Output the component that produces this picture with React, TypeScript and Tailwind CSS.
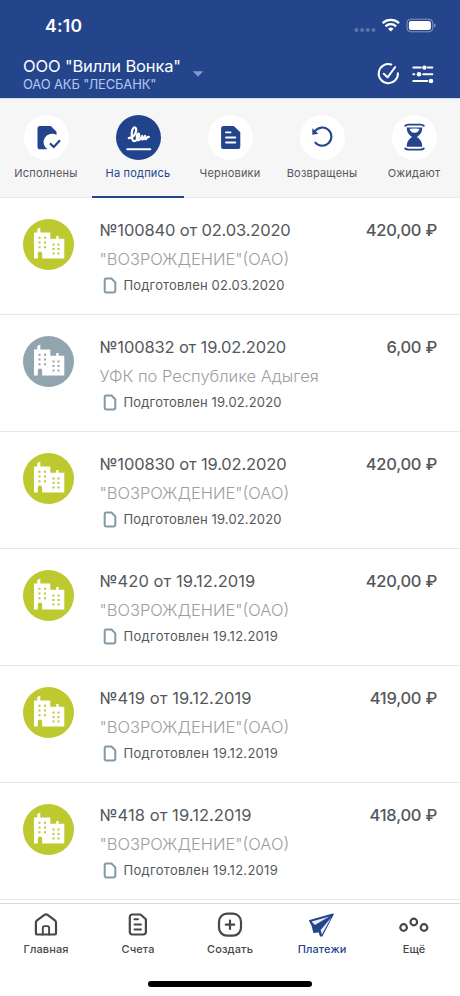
import type { ReactNode } from "react";

type Payment = {
  title: string;
  payee: string;
  date: string;
  amount: string;
  color: string;
};

const PAYMENTS: Payment[] = [
  { title: "№100840 от 02.03.2020", payee: '"ВОЗРОЖДЕНИЕ"(ОАО)', date: "02.03.2020", amount: "420,00 ₽", color: "bg-[#bdc92e]" },
  { title: "№100832 от 19.02.2020", payee: "УФК по Республике Адыгея", date: "19.02.2020", amount: "6,00 ₽", color: "bg-[#91a5af]" },
  { title: "№100830 от 19.02.2020", payee: '"ВОЗРОЖДЕНИЕ"(ОАО)', date: "19.02.2020", amount: "420,00 ₽", color: "bg-[#bdc92e]" },
  { title: "№420 от 19.12.2019", payee: '"ВОЗРОЖДЕНИЕ"(ОАО)', date: "19.12.2019", amount: "420,00 ₽", color: "bg-[#bdc92e]" },
  { title: "№419 от 19.12.2019", payee: '"ВОЗРОЖДЕНИЕ"(ОАО)', date: "19.12.2019", amount: "419,00 ₽", color: "bg-[#bdc92e]" },
  { title: "№418 от 19.12.2019", payee: '"ВОЗРОЖДЕНИЕ"(ОАО)', date: "19.12.2019", amount: "418,00 ₽", color: "bg-[#bdc92e]" },
];

function StatusIcons() {
  return (
    <svg width="86" height="16" viewBox="0 0 86 16" className="mr-[22px]">
      <g fill="#fff" opacity="0.25">
        <circle cx="4.4" cy="12" r="2" />
        <circle cx="10.1" cy="12" r="2" />
        <circle cx="15.8" cy="12" r="2" />
        <circle cx="21.5" cy="12" r="2" />
      </g>
      <g fill="none" stroke="#fff" strokeWidth="2.3">
        <path d="M30.6 5.1a12.2 12.2 0 0 1 16.4 0" />
        <path d="M33.5 8.3a7.8 7.8 0 0 1 10.6 0" />
      </g>
      <path d="M38.8 13.6 36 10.8a4.1 4.1 0 0 1 5.6 0z" fill="#fff" />
      <rect x="55" y="1.2" width="25.8" height="12.6" rx="3.8" fill="none" stroke="#fff" strokeOpacity="0.45" />
      <rect x="56.9" y="3" width="22" height="9" rx="2" fill="#fff" />
      <path d="M82.2 5.4a2.3 2.3 0 0 1 0 4.2z" fill="#fff" fillOpacity="0.5" />
    </svg>
  );
}

function Header() {
  return (
    <header className="h-[98px] bg-[#24458c] text-white">
      <div className="flex h-[52px] items-center justify-between">
        <span className="ml-[45px] text-[17.5px] leading-5 font-semibold tracking-[0.3px]">4:10</span>
        <StatusIcons />
      </div>
      <div className="flex h-[46px]">
        <div className="ml-[23px] w-[168px] pt-[4px] whitespace-nowrap">
          <p className="text-[16.5px] leading-5 tracking-[-0.15px]">ООО "Вилли Вонка"</p>
          <p className="text-[13px] leading-4 tracking-[-0.15px] text-[#b6c8f2]">ОАО АКБ "ЛЕСБАНК"</p>
        </div>
        <svg width="12" height="6" viewBox="0 0 12 6" className="mt-[19px] ml-[1px]">
          <path d="M.8.3h10.4L6 5.8z" fill="#8699c9" />
        </svg>
        <div className="mt-[10px] mr-[25px] ml-auto flex gap-[11px]">
          <svg width="24" height="24" viewBox="0 0 24 24" fill="none" stroke="#fff" strokeWidth="2" strokeLinecap="round" strokeLinejoin="round">
            <path d="M15.3 2.5a9.6 9.6 0 1 0 6.6 8.7" />
            <path d="m7.8 11.7 3.8 3.7L19.2 5" />
          </svg>
          <svg width="24" height="24" viewBox="0 0 24 24" fill="none" stroke="#fff" strokeWidth="2" strokeLinecap="round">
            <path d="M2.3 5.6h7.5M16.8 5.6h4.5M2.3 12.3h1M12.2 12.3h9.1M2.3 19h14" />
            <g fill="#fff" stroke="none">
              <circle cx="13.4" cy="5.6" r="2.2" />
              <circle cx="8" cy="12.3" r="2.3" />
              <circle cx="20" cy="19" r="2.3" />
            </g>
          </svg>
        </div>
      </div>
    </header>
  );
}

function Tab({ label, active, children }: { label: string; active?: boolean; children: ReactNode }) {
  return (
    <button
      className={
        active
          ? "flex flex-1 flex-col items-center border-b-2 border-[#24458c] pt-[16px] text-[#24458c]"
          : "flex flex-1 flex-col items-center border-b border-[#e7ebed] pt-[16px] text-[#55575a]"
      }
    >
      <span className={active ? "size-[45px] rounded-full bg-[#21438c]" : "size-[45px] rounded-full bg-white"}>
        <svg width="45" height="45" viewBox="0 0 45 45">{children}</svg>
      </span>
      <span className="mt-[5px] text-[11px] leading-4 tracking-[0.2px] whitespace-nowrap">{label}</span>
    </button>
  );
}

function Tabs() {
  return (
    <nav className="flex h-[100px] border-t border-[#d3dff7] bg-[#f6f6f7]">
      <Tab label="Исполнены">
        <path d="M16.1 11h10.7l5.7 5.7V20a8.2 8.2 0 0 0-9 14.3h-7.4a2.6 2.6 0 0 1-2.6-2.6V13.6a2.6 2.6 0 0 1 2.6-2.6z" fill="#24458c" />
        <path d="m26 28.4 3.8 3.6 6.2-6.8" fill="none" stroke="#24458c" strokeWidth="2.2" />
      </Tab>
      <Tab label="На подпись" active>
        <g fill="none" stroke="#fff" strokeLinecap="round" strokeLinejoin="round">
          <path d="M12.8 23.2c4.7-.5 8.4-6.1 7.2-9.6-1-2.7-4.3-.4-4.3 5.2 0 4.4.7 7.9 3.3 7.200 2.900-.8 4.800-4.900 4.100-6.700-.8-1.700-2.600.2-2.300 3.400.3 3.600 3 3.200 4.600-.2l.8-1.600c-.8 3.500.2 4.700 1.600 2.300l1.300-2.300c-.8 3.200.4 4.200 1.700 2 .8-1.400 1.300-1.200 2-.9" strokeWidth="2.2" />
          <path d="M11.3 34.3h23" strokeWidth="2" />
        </g>
      </Tab>
      <Tab label="Черновики">
        <path d="M15.7 11h10.1l6.5 6.2v14.3a2.6 2.6 0 0 1-2.6 2.6h-14a2.6 2.6 0 0 1-2.6-2.6V13.6a2.6 2.6 0 0 1 2.6-2.6z" fill="#24458c" />
        <path d="M18 17.4h4.500M18 22.500h9.300M18 27.500h9.300" fill="none" stroke="#fff" strokeWidth="1.9" strokeLinecap="round" />
      </Tab>
      <Tab label="Возвращены">
        <path d="M15 16.2A9.1 9.1 0 1 1 15.4 27.6" fill="none" stroke="#24458c" strokeWidth="2.1" strokeLinecap="round" />
        <path d="M12.3 13.2v6.600l6-1z" fill="#24458c" />
      </Tab>
      <Tab label="Ожидают">
        <path d="M13.2 10.8c1-1.3 2.300-1.200 3.800-1.200h11c1.500 0 2.800-.1 3.800 1.200M13.200 33.400c1 1.300 2.300 1.200 3.800 1.200h11c1.500 0 2.800.1 3.800-1.200" fill="none" stroke="#24458c" strokeWidth="1.9" strokeLinecap="round" />
        <path d="M14.8 12.5h15.4c0 5-2 7.300-5.400 9.600 3.400 2.300 5.400 4.600 5.400 9.600H14.800c0-5 2-7.300 5.400-9.600-3.400-2.300-5.400-4.600-5.400-9.600z" fill="#24458c" />
        <path d="M17.6 14.1c1-.8 8.800-.8 9.800 0-.5 2.300-2.200 3.700-4.900 3.700s-4.400-1.400-4.900-3.700z" fill="#fff" />
      </Tab>
    </nav>
  );
}

function BuildingIcon() {
  return (
    <svg width="51" height="51" viewBox="0 0 51 51">
      <path
        fillRule="evenodd"
        fill="#fff"
        d="M11 13.500h3.300V10l3-1.500v5h10v6.200h6V17h2.300v2.700h5.700v19.800H19.200v-4.700a2.200 2.200 0 0 0-4.400 0v4.700H11zM15.500 17.700v2h2v-2zM21 17.700v2h2v-2zM15.500 22.400v2h2v-2zM21 22.400v2h2v-2zM15.500 27.200v2h2v-2zM21 27.200v2h2v-2zM29.500 24.500v2h2v-2zM34.500 24.500v2h2v-2zM29.500 29v2h2v-2zM34.500 29v2h2v-2zM29.500 33.500v2h2v-2zM34.500 33.500v2h2v-2z"
      />
    </svg>
  );
}

function PaymentRow({ payment }: { payment: Payment }) {
  // six-digit numbers are set a little tighter
  const long = payment.title.length > 18;
  return (
    <li className="flex h-[117px] border-b border-[#e7e8e9] pr-[23px] pl-[22.5px] whitespace-nowrap">
      <div className={`mt-[21px] size-[51px] shrink-0 rounded-full ${payment.color}`}>
        <BuildingIcon />
      </div>
      <div className="ml-[26px] flex-1">
        <div className="mt-[20px] flex justify-between text-[#55585b]">
          <span className={long ? "text-[16.5px] leading-6 tracking-[-0.16px]" : "text-[16.5px] leading-6 tracking-[0.06px]"}>
            {payment.title}
          </span>
          <span className="text-[16.5px] leading-6 font-medium tracking-[-0.24px]">{payment.amount}</span>
        </div>
        <p className="mt-[5px] text-[16.5px] leading-6 font-light text-[#9c9ea0]">{payment.payee}</p>
        <div className="mt-[4px] flex items-center text-[#55585b]">
          <svg width="14" height="17" viewBox="0 0 14 17" className="ml-[3px]">
            <path d="M3.2 1.5h5.3l3.800 3.800v8.200a2 2 0 0 1-2 2H3.200a1.500 1.500 0 0 1-1.500-1.500V3a1.500 1.500 0 0 1 1.500-1.500z" fill="none" stroke="#8299a6" strokeWidth="2" />
          </svg>
          <span className={long ? "ml-[7px] text-[13px] leading-5 tracking-[0.15px]" : "ml-[7px] text-[13px] leading-5 tracking-[0.28px]"}>
            Подготовлен {payment.date}
          </span>
        </div>
      </div>
    </li>
  );
}

function NavItem({ label, active, children }: { label: string; active?: boolean; children: ReactNode }) {
  return (
    <button className={active ? "flex flex-1 flex-col items-center pt-[7px] text-[#24458c]" : "flex flex-1 flex-col items-center pt-[7px] text-[#464748]"}>
      <svg width="30" height="28" viewBox="0 0 30 28" fill="none" stroke="currentColor" strokeWidth="2.2" strokeLinecap="round" strokeLinejoin="round">
        {children}
      </svg>
      <span className="mt-[2px] text-[11px] leading-4 font-medium tracking-[0.12px]">{label}</span>
    </button>
  );
}

function BottomNav() {
  return (
    <footer className="h-[93px] border-t border-[#d9dadb] bg-white">
      <nav className="flex h-[70px]">
        <NavItem label="Главная">
          <path d="M6 23.500h17.800a1.200 1.200 0 0 0 1.200-1.200V11.700a3 3 0 0 0-1.100-2.300l-7.300-5.500a2.600 2.600 0 0 0-3.200 0L6 9.400a3 3 0 0 0-1.100 2.300v10.600A1.200 1.200 0 0 0 6 23.500z" />
          <path d="M11.800 23.500v-6.600a1.800 1.800 0 0 1 1.800-1.800h2.700a1.800 1.800 0 0 1 1.800 1.800v6.600" strokeWidth="1.9" />
        </NavItem>
        <NavItem label="Счета">
          <path d="M9.200 3.500h8.300l5.400 4.800v12.700a2.500 2.500 0 0 1-2.500 2.500H9.300a2.500 2.500 0 0 1-2.500-2.500V5.900A2.400 2.400 0 0 1 9.200 3.500z" />
          <path d="M11.500 8.300h3.500M11.500 13.400h6.500M11.500 18.400h6.500" strokeWidth="2" />
        </NavItem>
        <NavItem label="Создать">
          <rect x="4" y="2.700" width="22" height="22" rx="8" />
          <path d="M15 9.500v8.400M10.800 13.700h8.400" />
        </NavItem>
        <NavItem label="Платежи" active>
          <path d="M2.800 9.700 26 3.200 14.900 24.700h-1.300l-1.400-4.300-5.200.8-1.600-6.600z" fill="currentColor" strokeWidth="1.6" />
          <path d="M4.600 10.500 22.500 5.400 7.800 14.100z" fill="#e5ecfb" stroke="none" />
          <path d="m24.300 6.500-9.400 17-1.300-4.500z" fill="#e5ecfb" stroke="none" />
        </NavItem>
        <NavItem label="Ещё">
          <circle cx="4.600" cy="16.500" r="3.300" />
          <circle cx="14.800" cy="11" r="3.300" />
          <circle cx="25" cy="16.500" r="3.300" />
        </NavItem>
      </nav>
      <div className="mx-auto mt-[7px] h-[6px] w-[164px] rounded-full bg-black" />
    </footer>
  );
}

export default function App() {
  return (
    <div className="flex h-[996px] w-[460px] flex-col overflow-hidden bg-white font-[Inter,sans-serif]">
      <Header />
      <Tabs />
      <ul className="flex-1">
        {PAYMENTS.map((payment) => (
          <PaymentRow key={payment.title} payment={payment} />
        ))}
      </ul>
      <BottomNav />
    </div>
  );
}
